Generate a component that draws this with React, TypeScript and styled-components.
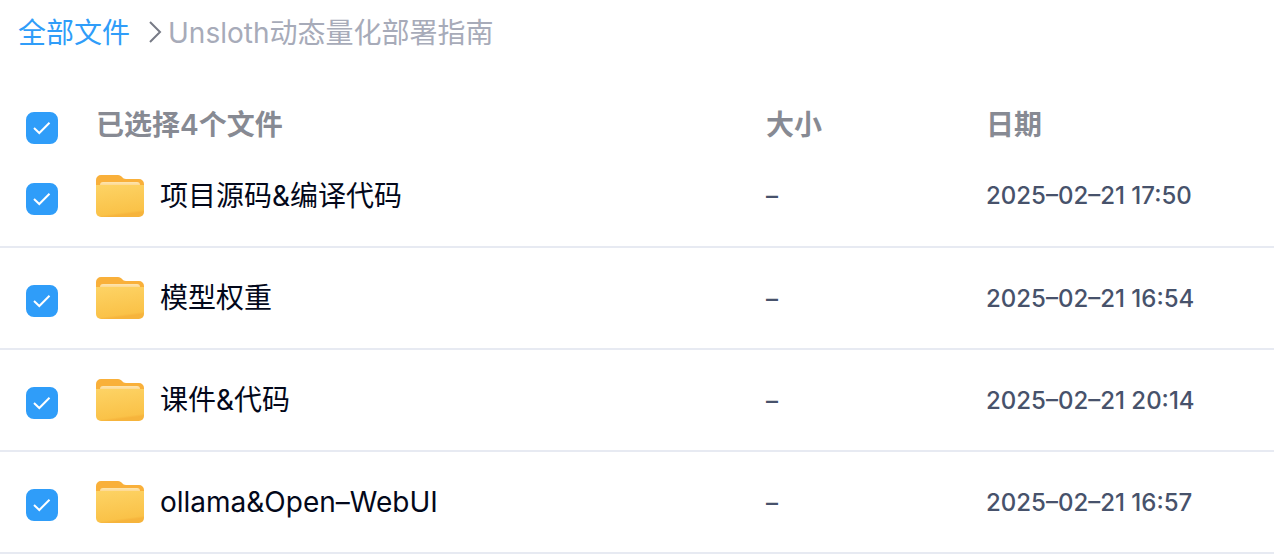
import React, { useState } from "react";
import styled, { createGlobalStyle } from "styled-components";

const GlobalStyle = createGlobalStyle`
  * { box-sizing: border-box; }
  body {
    margin: 0;
    background: #fff;
    color: #03081a;
    font-family: Inter, "Noto Sans CJK SC", sans-serif;
  }
`;

const Breadcrumb = styled.nav`
  display: flex;
  align-items: center;
  height: 66px;
  padding: 0 18px;
  font-size: 28px;
  line-height: 40px;
  white-space: nowrap;
`;

const CrumbLink = styled.a`
  color: #2f9df9;
  text-decoration: none;
`;

const Separator = styled.svg`
  width: 14px;
  height: 24px;
  margin: 0 6px 2px 18px;
`;

const Current = styled.span`
  color: #a7abb9;
`;

const Files = styled.table`
  width: 100%;
  margin-top: 38px;
  border-collapse: collapse;
  table-layout: fixed;
`;

const CheckCol = styled.col`
  width: 96px;
`;

const SizeCol = styled.col`
  width: 220px;
`;

const DateCol = styled.col`
  width: 288px;
`;

const Heading = styled.th`
  height: 41px;
  padding: 0;
  color: #878a93;
  font-size: 28px;
  font-weight: 600;
  line-height: 40px;
  text-align: left;
`;

const Row = styled.tr`
  height: 102px;
  border-bottom: 2px solid #e7eaf2;
`;

const Cell = styled.td`
  padding: 0;
  color: #47526b;
  font-family: Inter, sans-serif;
  font-size: 24px;
  font-weight: 500;
  white-space: nowrap;
`;

const Name = styled.label`
  display: flex;
  align-items: center;
  gap: 16px;
  color: #03081a;
  font-family: Inter, "Noto Sans CJK SC", sans-serif;
  font-size: 28px;
  font-weight: 400;
  line-height: 40px;
`;

const CheckBox = styled.span`
  display: grid;
  width: 32px;
  height: 32px;
  margin: 6px 0 0 26px;

  & > * { grid-area: 1 / 1; }
`;

const CheckInput = styled.input`
  appearance: none;
  width: 32px;
  height: 32px;
  margin: 0;
  border: 2px solid #c4c8d4;
  border-radius: 8px;

  &:checked {
    border-color: #2f9df9;
    background: #2f9df9;
  }
`;

const Tick = styled.svg`
  width: 32px;
  height: 32px;
  pointer-events: none;
`;

const FolderSvg = styled.svg`
  flex: none;
  width: 48px;
  height: 48px;
`;

function Check(props: React.InputHTMLAttributes<HTMLInputElement>) {
  return (
    <CheckBox>
      <CheckInput type="checkbox" {...props} />
      <Tick viewBox="0 0 32 32" fill="none" stroke="#fff" strokeWidth="2" aria-hidden="true">
        <path d="M8 16l5.300 5L23.500 10.800" />
      </Tick>
    </CheckBox>
  );
}

function Folder() {
  return (
    <FolderSvg viewBox="0 0 48 48" aria-hidden="true">
      <defs>
        <linearGradient id="front" x1="0" y1="0" x2="0.200" y2="1">
          <stop offset="0" stopColor="#fdd365" />
          <stop offset="0.930" stopColor="#fac248" />
          <stop offset="1" stopColor="#f6b43c" />
        </linearGradient>
        <linearGradient id="paper" x1="0" y1="0" x2="0" y2="1">
          <stop offset="0" stopColor="#fde5b0" />
          <stop offset="1" stopColor="#fdd587" />
        </linearGradient>
      </defs>
      <path d="M0 8a5 5 0 0 1 5-5h17c4 0 4 4 8 4h13a5 5 0 0 1 5 5v17H0z" fill="#f9b03a" />
      <path d="M4 14v-1a3 3 0 0 1 3-3h34a3 3 0 0 1 3 3v1z" fill="url(#paper)" />
      <path d="M0 13h48v27a5 5 0 0 1-5 5H5a5 5 0 0 1-5-5z" fill="url(#front)" />
    </FolderSvg>
  );
}

const files = [
  { name: "项目源码&编译代码", date: "2025–02–21 17:50" },
  { name: "模型权重", date: "2025–02–21 16:54" },
  { name: "课件&代码", date: "2025–02–21 20:14" },
  { name: "ollama&Open–WebUI", date: "2025–02–21 16:57" },
];

export default function App() {
  const [selected, setSelected] = useState(files.map(() => true));
  const count = selected.filter(Boolean).length;
  return (
    <>
      <GlobalStyle />
      <Breadcrumb aria-label="路径">
        <CrumbLink href="#">全部文件</CrumbLink>
        <Separator viewBox="0 0 14 24" fill="none" stroke="#777b86" strokeWidth="2" aria-hidden="true">
          <path d="M2 2l10 10L2 22" />
        </Separator>
        <Current>Unsloth动态量化部署指南</Current>
      </Breadcrumb>
      <Files>
        <colgroup>
          <CheckCol />
          <col />
          <SizeCol />
          <DateCol />
        </colgroup>
        <thead>
          <tr>
            <Heading><Check aria-label="全选" checked={count === files.length} onChange={(e) => setSelected(files.map(() => e.target.checked))} /></Heading>
            <Heading>已选择{count}个文件</Heading>
            <Heading>大小</Heading>
            <Heading>日期</Heading>
          </tr>
        </thead>
        <tbody>
          {files.map((file, i) => (
            <Row key={file.name}>
              <Cell><Check id={`file-${i}`} checked={selected[i]} onChange={() => setSelected(selected.map((s, j) => (i === j ? !s : s)))} /></Cell>
              <Cell><Name htmlFor={`file-${i}`}><Folder />{file.name}</Name></Cell>
              <Cell>–</Cell>
              <Cell>{file.date}</Cell>
            </Row>
          ))}
        </tbody>
      </Files>
    </>
  );
}
